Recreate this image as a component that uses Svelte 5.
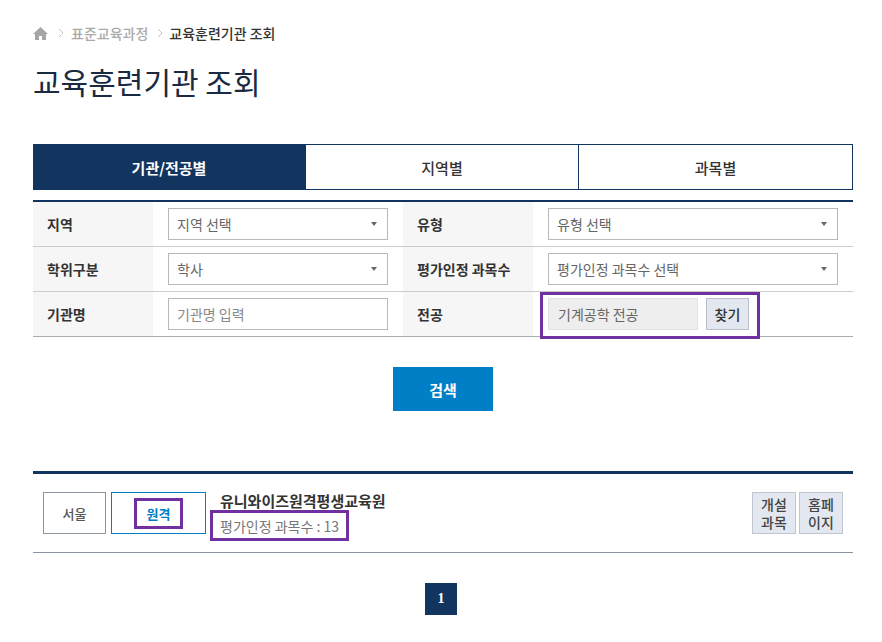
<script>
  const tabs = ['기관/전공별', '지역별', '과목별'];
</script>

<div class="page">
  <nav class="crumbs">
    <svg class="home" width="15" height="13" viewBox="0 0 15 13"><path d="M7.5 0 L15 7 H13 V13 H9 V9 H6 V13 H2 V7 H0 Z" fill="#a6a6a6"/></svg>
    <svg class="sep" width="6" height="10" viewBox="0 0 6 10"><path d="M1 1 L5 5 L1 9" fill="none" stroke="#c4c4c4"/></svg>
    <span class="crumb">표준교육과정</span>
    <svg class="sep" width="6" height="10" viewBox="0 0 6 10"><path d="M1 1 L5 5 L1 9" fill="none" stroke="#c4c4c4"/></svg>
    <span class="crumb current">교육훈련기관 조회</span>
  </nav>

  <h1>교육훈련기관 조회</h1>

  <div class="tabs">
    {#each tabs as tab, i}
      <div class="tab" class:active={i === 0}>{tab}</div>
    {/each}
  </div>

  <div class="form">
    <div class="row">
      <div class="label">지역</div>
      <div class="field"><div class="select left">지역 선택<span class="caret"></span></div></div>
      <div class="label">유형</div>
      <div class="field"><div class="select right">유형 선택<span class="caret"></span></div></div>
    </div>
    <div class="row">
      <div class="label">학위구분</div>
      <div class="field"><div class="select left">학사<span class="caret"></span></div></div>
      <div class="label">평가인정 과목수</div>
      <div class="field"><div class="select right">평가인정 과목수 선택<span class="caret"></span></div></div>
    </div>
    <div class="row">
      <div class="label">기관명</div>
      <div class="field"><div class="select left placeholder">기관명 입력</div></div>
      <div class="label">전공</div>
      <div class="field major">
        <div class="readonly">기계공학 전공</div>
        <div class="find">찾기</div>
        <span class="mark mark-major"></span>
      </div>
    </div>
  </div>

  <div class="search-wrap"><div class="search">검색</div></div>

  <div class="result">
    <div class="tag">서울</div>
    <div class="tag online">
      <span class="online-text">원격</span>
      <span class="mark mark-online"></span>
    </div>
    <div class="info">
      <div class="name">유니와이즈원격평생교육원</div>
      <div class="count">평가인정 과목수 : 13<span class="mark mark-count"></span></div>
    </div>
    <div class="links">
      <div class="link">개설<br />과목</div>
      <div class="link">홈페<br />이지</div>
    </div>
  </div>

  <div class="paging"><span class="pg">1</span></div>
</div>

<style>
  :global(body) {
    background: #fff;
  }
  .page {
    width: 820px;
    margin-left: 33px;
    font-family: "Noto Sans CJK KR", "Liberation Sans", sans-serif;
    font-size: 14px;
    color: #333;
  }
  .crumbs {
    display: flex;
    align-items: center;
    height: 20px;
    padding-top: 23px;
    gap: 8px;
    font-size: 14px;
  }
  .home {
    margin-right: 2px;
  }
  .crumb {
    color: #aaa;
    font-weight: 500;
    margin-left: -1px;
    margin-right: 1px;
  }
  .crumb.current {
    color: #333;
    margin-left: -2px;
  }
  h1 {
    margin: 0;
    padding-top: 16px;
    height: 101px;
    box-sizing: border-box;
    font-size: 30px;
    line-height: 44px;
    font-weight: 400;
    color: #1a2a40;
  }
  .tabs {
    display: grid;
    grid-template-columns: 273px 273px 274px;
    height: 46px;
    box-sizing: border-box;
  }
  .tab {
    display: flex;
    align-items: center;
    justify-content: center;
    border: 1px solid #12355f;
    border-left: 0;
    font-size: 15px;
    font-weight: 500;
    color: #333;
  }
  .tab.active {
    background: #12355f;
    color: #fff;
    font-weight: 700;
  }
  .form {
    margin-top: 10px;
    border-top: 2px solid #12355f;
    border-bottom: 1px solid #a9adb3;
  }
  .row {
    display: grid;
    grid-template-columns: 120px 250px 130px 320px;
    height: 45px;
    border-bottom: 1px solid #ccc;
    box-sizing: border-box;
  }
  .row:last-child {
    border-bottom: 0;
    height: 44px;
  }
  .label {
    background: #f6f6f6;
    display: flex;
    align-items: center;
    padding-left: 14px;
    font-weight: 700;
    color: #333;
  }
  .field {
    display: flex;
    align-items: center;
    padding-left: 15px;
    position: relative;
  }
  .select {
    height: 32px;
    box-sizing: border-box;
    border: 1px solid #b8b8b8;
    background: #fff;
    display: flex;
    align-items: center;
    justify-content: space-between;
    padding: 0 10px 0 8px;
    color: #666;
  }
  .select.left {
    width: 220px;
  }
  .select.right {
    width: 290px;
  }
  .placeholder {
    color: #888;
  }
  .caret {
    width: 0;
    height: 0;
    border-left: 3px solid transparent;
    border-right: 3px solid transparent;
    border-top: 4px solid #666;
  }
  .major {
    gap: 8px;
  }
  .readonly {
    width: 150px;
    height: 32px;
    box-sizing: border-box;
    border: 1px solid #e2e2e2;
    background: #eee;
    display: flex;
    align-items: center;
    padding-left: 9px;
    color: #666;
  }
  .find {
    width: 43px;
    height: 32px;
    box-sizing: border-box;
    border: 1px solid #b9bec8;
    background: #e3e7ef;
    display: flex;
    align-items: center;
    justify-content: center;
    font-weight: 500;
    color: #333;
  }
  .mark {
    position: absolute;
    border: 3px solid #7030a0;
    box-sizing: border-box;
    pointer-events: none;
  }
  .mark-major {
    left: 7px;
    top: 0;
    width: 220px;
    height: 47px;
  }
  .search-wrap {
    display: flex;
    justify-content: center;
    margin-top: 30px;
  }
  .search {
    width: 100px;
    height: 44px;
    background: #007fc6;
    color: #fff;
    font-size: 15px;
    font-weight: 700;
    display: flex;
    align-items: center;
    justify-content: center;
  }
  .result {
    margin-top: 60px;
    border-top: 3px solid #12355f;
    border-bottom: 1px solid #8c96a0;
    height: 78px;
    padding: 0 10px;
    display: flex;
    align-items: center;
    gap: 5px;
  }
  .tag {
    width: 63px;
    height: 42px;
    box-sizing: border-box;
    border: 1px solid #8c96a0;
    display: flex;
    align-items: center;
    justify-content: center;
    font-size: 13px;
    color: #555;
    font-weight: 500;
  }
  .tag.online {
    width: 95px;
    border-color: #007fc6;
    color: #007fc6;
    font-weight: 700;
    position: relative;
  }
  .mark-online {
    left: 22px;
    top: 5px;
    width: 49px;
    height: 31px;
  }
  .info {
    margin-left: 9px;
    flex: 1;
  }
  .name {
    font-size: 15px;
    font-weight: 700;
    color: #333;
    line-height: 20px;
  }
  .count {
    position: relative;
    margin-top: 5px;
    font-size: 14px;
    line-height: 20px;
    color: #777;
  }
  .mark-count {
    left: -10px;
    top: -6px;
    width: 139px;
    height: 31px;
  }
  .links {
    display: flex;
    gap: 3px;
  }
  .link {
    width: 44px;
    height: 42px;
    box-sizing: border-box;
    border: 1px solid #c0c5cf;
    background: #e3e7ef;
    font-size: 14px;
    line-height: 18px;
    font-weight: 500;
    color: #444;
    text-align: center;
    padding-top: 2px;
  }
  .paging {
    display: flex;
    justify-content: center;
    margin-top: 30px;
    padding-right: 4px;
  }
  .pg {
    width: 32px;
    height: 32px;
    background: #12355f;
    color: #fff;
    font-weight: 700;
    display: flex;
    align-items: center;
    justify-content: center;
    font-family: "Liberation Serif", serif;
  }
</style>
